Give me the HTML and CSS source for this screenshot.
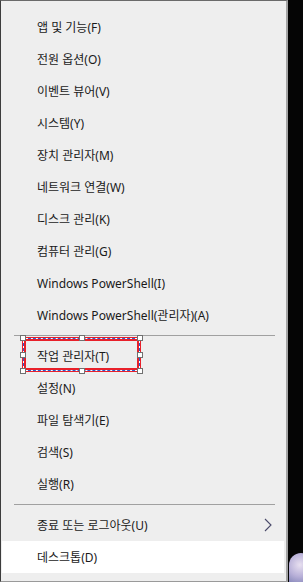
FILE: index.html
```html
<!DOCTYPE html>
<html lang="ko">
<head>
<meta charset="utf-8">
<link rel="stylesheet" href="styles.css">
</head>
<body>
<div class="screen">
  <div class="menu">
    <div class="item">앱 및 기능(F)</div>
    <div class="item">전원 옵션(O)</div>
    <div class="item">이벤트 뷰어(V)</div>
    <div class="item">시스템(Y)</div>
    <div class="item">장치 관리자(M)</div>
    <div class="item">네트워크 연결(W)</div>
    <div class="item">디스크 관리(K)</div>
    <div class="item">컴퓨터 관리(G)</div>
    <div class="item">Windows PowerShell(I)</div>
    <div class="item">Windows PowerShell(관리자)(A)</div>
    <div class="sep"></div>
    <div class="item focus-row">작업 관리자(T)</div>
    <div class="item">설정(N)</div>
    <div class="item">파일 탐색기(E)</div>
    <div class="item">검색(S)</div>
    <div class="item">실행(R)</div>
    <div class="sep"></div>
    <div class="item has-sub">종료 또는 로그아웃(U)
      <svg class="chev" width="8" height="14" viewBox="0 0 8 14"><polyline points="1,1 7,7 1,13" fill="none" stroke="#4a4a6a" stroke-width="1.1"/></svg>
    </div>
    <div class="item active">데스크톱(D)</div>
  </div>
  <div class="focus">
    <span class="dash"></span>
    <span class="h h-tl"></span><span class="h h-tc"></span><span class="h h-tr"></span>
    <span class="h h-ml"></span><span class="h h-mr"></span>
    <span class="h h-bl"></span><span class="h h-bc"></span><span class="h h-br"></span>
  </div>
  <div class="corner-icon"></div>
</div>
</body>
</html>
```
FILE: styles.css
```css
html, body {
  margin: 0;
  padding: 0;
  background: #000;
}
.screen {
  position: relative;
  width: 303px;
  height: 582px;
  overflow: hidden;
  background: #050505;
}
.menu {
  box-sizing: border-box;
  width: 288px;
  height: 582px;
  background: #eeeeee;
  border: 1px solid #9a9a9a;
  border-left-color: #3c3c3c;
  border-top-color: #6a6a6a;
  border-right: 2px solid #a3a3a3;
  padding: 10px 2px 7px 1px;
  display: flex;
  flex-direction: column;
  font-family: "Noto Sans", "Noto Sans CJK KR", sans-serif;
  font-size: 12px;
  color: #1a1a1a;
}
.item {
  position: relative;
  height: 32px;
  display: flex;
  align-items: center;
  padding-left: 35px;
  flex: none;
}
.item.active {
  background: #ffffff;
}
.sep {
  flex: none;
  height: 9px;
  display: flex;
  align-items: center;
  padding: 0 9px 0 12px;
}
.sep::before {
  content: "";
  display: block;
  width: 100%;
  height: 1px;
  background: #a0a0a0;
}
.chev {
  position: absolute;
  right: 12px;
  top: 9px;
}
.focus {
  position: absolute;
  left: 22px;
  top: 337px;
  width: 119px;
  height: 35px;
  box-sizing: border-box;
  border: 4px solid #e8202a;
}
.dash {
  position: absolute;
  inset: -3px;
  border: 1px solid #ffffff;
}
.dash::after {
  content: "";
  position: absolute;
  inset: -1px;
  border: 1px dashed #2a5fd0;
}
.h {
  position: absolute;
  width: 4px;
  height: 4px;
  background: #fff;
  border: 1px solid #707070;
  z-index: 2;
}
.h-tl { left: -6px; top: -6px; }
.h-tc { left: calc(50% - 3px); top: -6px; }
.h-tr { right: -6px; top: -6px; }
.h-ml { left: -6px; top: calc(50% - 3px); }
.h-mr { right: -6px; top: calc(50% - 3px); }
.h-bl { left: -6px; bottom: -6px; }
.h-bc { left: calc(50% - 3px); bottom: -6px; }
.h-br { right: -6px; bottom: -6px; }
.corner-icon {
  position: absolute;
  left: 289px;
  top: 553px;
  width: 24px;
  height: 34px;
  border-radius: 12px 12px 0 0;
  background: radial-gradient(circle at 45% 35%, #e8e0f0 0%, #b8b0d8 45%, #6a70a8 100%);
}
```
